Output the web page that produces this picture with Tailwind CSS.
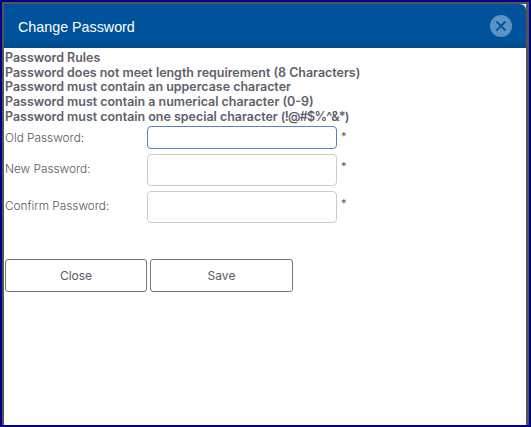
<!DOCTYPE html>
<html lang="en">
<head>
    <meta charset="UTF-8">
    <title>Change Password</title>
    <script src="https://cdn.jsdelivr.net/npm/@tailwindcss/browser@4"></script>
</head>
<body class="bg-[#00008b] h-[427px] w-[531px] overflow-hidden">
    <div class="h-[425px] w-[527px] ml-[2px] pt-[2px]">
        <div class="h-[423px] bg-[#555555] pt-[2px] pl-[2px] pr-[3px]">
            <div class="h-[421px] bg-white font-['Inter',sans-serif]">
                <!-- Header -->
                <div class="h-[44px] flex justify-between items-center pl-[14px] pr-[14px] rounded-tr-md bg-gradient-to-b from-[#00529b] from-80% to-[#004a8c]">
                    <h1 class="text-[14.3px] pt-[4px] text-white font-['Liberation_Sans',sans-serif]">Change Password</h1>
                    <button class="w-[22px] h-[22px] rounded-full bg-[#5b93c4] flex items-center justify-center">
                        <svg class="w-[12px] h-[12px]" viewBox="0 0 12 12" fill="none" stroke="#00529b" stroke-width="1.8" stroke-linecap="round">
                            <path d="M2 2l8 8M10 2l-8 8"></path>
                        </svg>
                    </button>
                </div>

                <!-- Rules -->
                <div class="pl-[1px] pt-[3px] text-[12.45px] leading-[14.7px] font-semibold text-[#5c616b]">
                    <div>Password Rules</div>
                    <div>Password does not meet length requirement (8 Characters)</div>
                    <div>Password must contain an uppercase character</div>
                    <div>Password must contain a numerical character (0-9)</div>
                    <div>Password must contain one special character <span class="tracking-[-0.7px]">(!@#$%^&amp;*)</span></div>
                </div>

                <!-- Form -->
                <div class="pl-[1px] pt-[1px] text-[11.8px] font-light text-[#555b66]">
                    <div class="flex items-start h-[28px]">
                        <label class="w-[142px] pt-[4px]">Old Password:</label>
                        <input type="password" class="w-[190px] h-[23px] border border-[#5b80c4] rounded bg-white">
                        <span class="ml-[4px] pt-[2px] text-[11px] font-normal">*</span>
                    </div>
                    <div class="flex items-start h-[37px]">
                        <label class="w-[142px] pt-[7px]">New Password:</label>
                        <input type="password" class="w-[190px] h-[32px] border border-[#cccccc] rounded bg-white">
                        <span class="ml-[4px] pt-[4px] text-[11px] font-normal">*</span>
                    </div>
                    <div class="flex items-start h-[37px]">
                        <label class="w-[142px] pt-[7px]">Confirm Password:</label>
                        <input type="password" class="w-[190px] h-[32px] border border-[#cccccc] rounded bg-white">
                        <span class="ml-[4px] pt-[4px] text-[11px] font-normal">*</span>
                    </div>
                </div>

                <!-- Buttons -->
                <div class="flex gap-[3px] pl-[1px] mt-[31px] text-[12px] text-[#555b66]">
                    <button class="w-[142px] h-[33px] pt-[2px] border border-[#777777] rounded-[3px] bg-white">Close</button>
                    <button class="w-[143px] h-[33px] pt-[2px] border border-[#777777] rounded-[3px] bg-white">Save</button>
                </div>
            </div>
        </div>
    </div>
</body>
</html>
